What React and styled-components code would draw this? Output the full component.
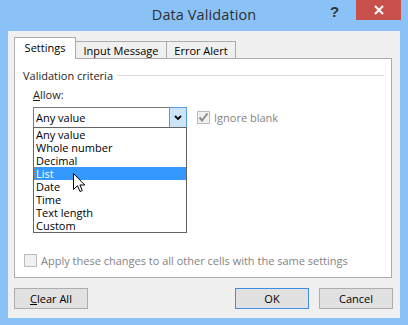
import styled, { createGlobalStyle } from "styled-components";

const Global = createGlobalStyle`
    html, body { margin: 0; padding: 0; }
    body {
        background: #8ac2f8;
        font-family: "Open Sans", "Liberation Sans", sans-serif;
        font-size: 11px;
        color: #000;
    }
`;

const Window = styled.div`
    width: 408px;
    height: 325px;
    background: #8ac2f8;
    display: flex;
    flex-direction: column;
    box-sizing: border-box;
`;

const TitleBar = styled.div`
    height: 31px;
    display: grid;
    grid-template-columns: 1fr auto 1fr;
    align-items: start;
`;

const Title = styled.div`
    grid-column: 2;
    padding-top: 5px;
    font-size: 14.5px;
    color: #2f2f2f;
    letter-spacing: 0.1px;
`;

const Controls = styled.div`
    grid-column: 3;
    justify-self: end;
    display: flex;
    align-items: flex-start;
    padding-right: 7px;
`;

const Help = styled.div`
    width: 14px;
    margin-right: 12px;
    padding-top: 3px;
    font-family: "Liberation Sans", sans-serif;
    font-weight: bold;
    font-size: 15px;
    color: #333;
`;

const Close = styled.div`
    width: 45px;
    height: 20px;
    background: #c7504b;
    display: flex;
    align-items: center;
    justify-content: center;
`;

const Client = styled.div`
    flex: 1;
    margin: 0 8px 7px 8px;
    background: #f0f0f0;
    padding: 7px 7px 9px 6px;
    display: flex;
    flex-direction: column;
`;

const TabStrip = styled.div`
    display: flex;
    align-items: flex-end;
    height: 21px;
    margin-bottom: -1px;
    position: relative;
    z-index: 1;
`;

const Tab = styled.div`
    box-sizing: border-box;
    width: ${p => p.w}px;
    height: ${p => (p.active ? 22 : 18)}px;
    margin-left: ${p => (p.first ? 0 : -1)}px;
    border: 1px solid #acacac;
    border-bottom: ${p => (p.active ? "none" : "1px solid #acacac")};
    background: ${p => (p.active ? "#fff" : "#f0f0f0")};
    display: flex;
    align-items: center;
    justify-content: center;
    padding-bottom: ${p => (p.active ? 3 : 0)}px;
    position: relative;
    z-index: ${p => (p.active ? 2 : 1)};
`;

const Panel = styled.div`
    box-sizing: border-box;
    width: 378px;
    height: 220px;
    border: 1px solid #acacac;
    background: #fff;
    padding: 8px 7px 9px 8px;
    display: flex;
    flex-direction: column;
`;

const GroupHeader = styled.div`
    display: flex;
    align-items: center;
    gap: 4px;
    height: 16px;
    color: #1e1e1e;
`;

const Rule = styled.div`
    flex: 1;
    height: 1px;
    background: #dcdcdc;
`;

const FieldLabel = styled.div`
    margin: 4px 0 0 10px;
    height: 17px;
    color: #1e1e1e;
    u { text-decoration: underline; }
`;

const ComboRow = styled.div`
    display: flex;
    align-items: center;
    gap: 10px;
    margin: 3px 0 0 10px;
`;

const ComboWrap = styled.div`
    position: relative;
    width: 154px;
`;

const Combo = styled.div`
    box-sizing: border-box;
    height: 21px;
    border: 1px solid #7a7a7a;
    background: #fff;
    display: flex;
    align-items: center;
    padding-left: 2px;
`;

const ComboText = styled.span`
    flex: 1;
`;

const DropButton = styled.div`
    box-sizing: border-box;
    width: 18px;
    height: 21px;
    margin: -1px -1px -1px 0;
    border: 1px solid #569de5;
    background: #cce4f7;
    display: flex;
    align-items: center;
    justify-content: center;
`;

const List = styled.div`
    position: absolute;
    top: 20px;
    left: 0;
    width: 100%;
    box-sizing: border-box;
    border: 1px solid #646464;
    background: #fff;
    z-index: 5;
`;

const Item = styled.div`
    height: 13px;
    line-height: 13px;
    padding-left: 2px;
    background: ${p => (p.selected ? "#3399ff" : "transparent")};
    color: ${p => (p.selected ? "#fff" : "#000")};
    outline: ${p => (p.selected ? "1px dotted #c27a38" : "none")};
    outline-offset: -1px;
`;

const Cursor = styled.svg`
    position: absolute;
    left: 40px;
    top: 66px;
    z-index: 6;
`;

const Check = styled.div`
    box-sizing: border-box;
    width: 13px;
    height: 13px;
    border: 1px solid #bcbcbc;
    background: #f0f0f0;
    display: flex;
    align-items: center;
    justify-content: center;
    flex: none;
`;

const CheckLabel = styled.label`
    display: flex;
    align-items: center;
    gap: 4px;
    color: #838383;
`;

const ApplyRow = styled.div`
    margin: auto 0 0 0;
    padding-left: 1px;
`;

const ButtonRow = styled.div`
    display: flex;
    align-items: center;
    margin-top: 10px;
`;

const Button = styled.div`
    box-sizing: border-box;
    width: 74px;
    height: 21px;
    border: 1px solid ${p => (p.primary ? "#3d8ee6" : "#adadad")};
    background: #e1e1e1;
    display: flex;
    align-items: center;
    justify-content: center;
    margin-left: ${p => p.ml || 0}px;
    u { text-decoration: underline; }
`;

const Spacer = styled.div`
    flex: 1;
`;

const items = ["Any value", "Whole number", "Decimal", "List", "Date", "Time", "Text length", "Custom"];

function Checkbox({ checked, children }) {
    return (
        <CheckLabel>
            <Check>
                {checked && (
                    <svg width="11" height="11" viewBox="0 0 11 11">
                        <path d="M1.5 5.5 L4 8.5 L9.5 1.5" fill="none" stroke="#8a8a8a" strokeWidth="2" />
                    </svg>
                )}
            </Check>
            {children}
        </CheckLabel>
    );
}

export default function App() {
    return (
        <Window>
            <Global />
            <TitleBar>
                <Title>Data Validation</Title>
                <Controls>
                    <Help>?</Help>
                    <Close>
                        <svg width="10" height="10" viewBox="0 0 10 10">
                            <path d="M1 1 L9 9 M9 1 L1 9" stroke="#fff" strokeWidth="2" />
                        </svg>
                    </Close>
                </Controls>
            </TitleBar>
            <Client>
                <TabStrip>
                    <Tab active first w={62}>Settings</Tab>
                    <Tab w={92}>Input Message</Tab>
                    <Tab w={70}>Error Alert</Tab>
                </TabStrip>
                <Panel>
                    <GroupHeader>
                        <span>Validation criteria</span>
                        <Rule />
                    </GroupHeader>
                    <FieldLabel><u>A</u>llow:</FieldLabel>
                    <ComboRow>
                        <ComboWrap>
                            <Combo>
                                <ComboText>Any value</ComboText>
                                <DropButton>
                                    <svg width="8" height="6" viewBox="0 0 8 6">
                                        <path d="M1 1 L4 4 L7 1" fill="none" stroke="#000" strokeWidth="1.8" />
                                    </svg>
                                </DropButton>
                            </Combo>
                            <List>
                                {items.map(it => (
                                    <Item key={it} selected={it === "List"}>{it}</Item>
                                ))}
                            </List>
                            <Cursor width="13" height="20" viewBox="0 0 13 20">
                                <path d="M0.5 0.5 L0.5 16.5 L4.5 12.8 L7 18.5 L9.3 17.5 L6.9 12 L11.8 12 Z" fill="#fff" stroke="#000" strokeWidth="1" strokeLinejoin="miter" />
                            </Cursor>
                        </ComboWrap>
                        <Checkbox checked>Ignore blank</Checkbox>
                    </ComboRow>
                    <ApplyRow>
                        <Checkbox>Apply these changes to all other cells with the same settings</Checkbox>
                    </ApplyRow>
                </Panel>
                <ButtonRow>
                    <Button><u>C</u>lear All</Button>
                    <Spacer />
                    <Button primary>OK</Button>
                    <Button ml={10}>Cancel</Button>
                </ButtonRow>
            </Client>
        </Window>
    );
}
